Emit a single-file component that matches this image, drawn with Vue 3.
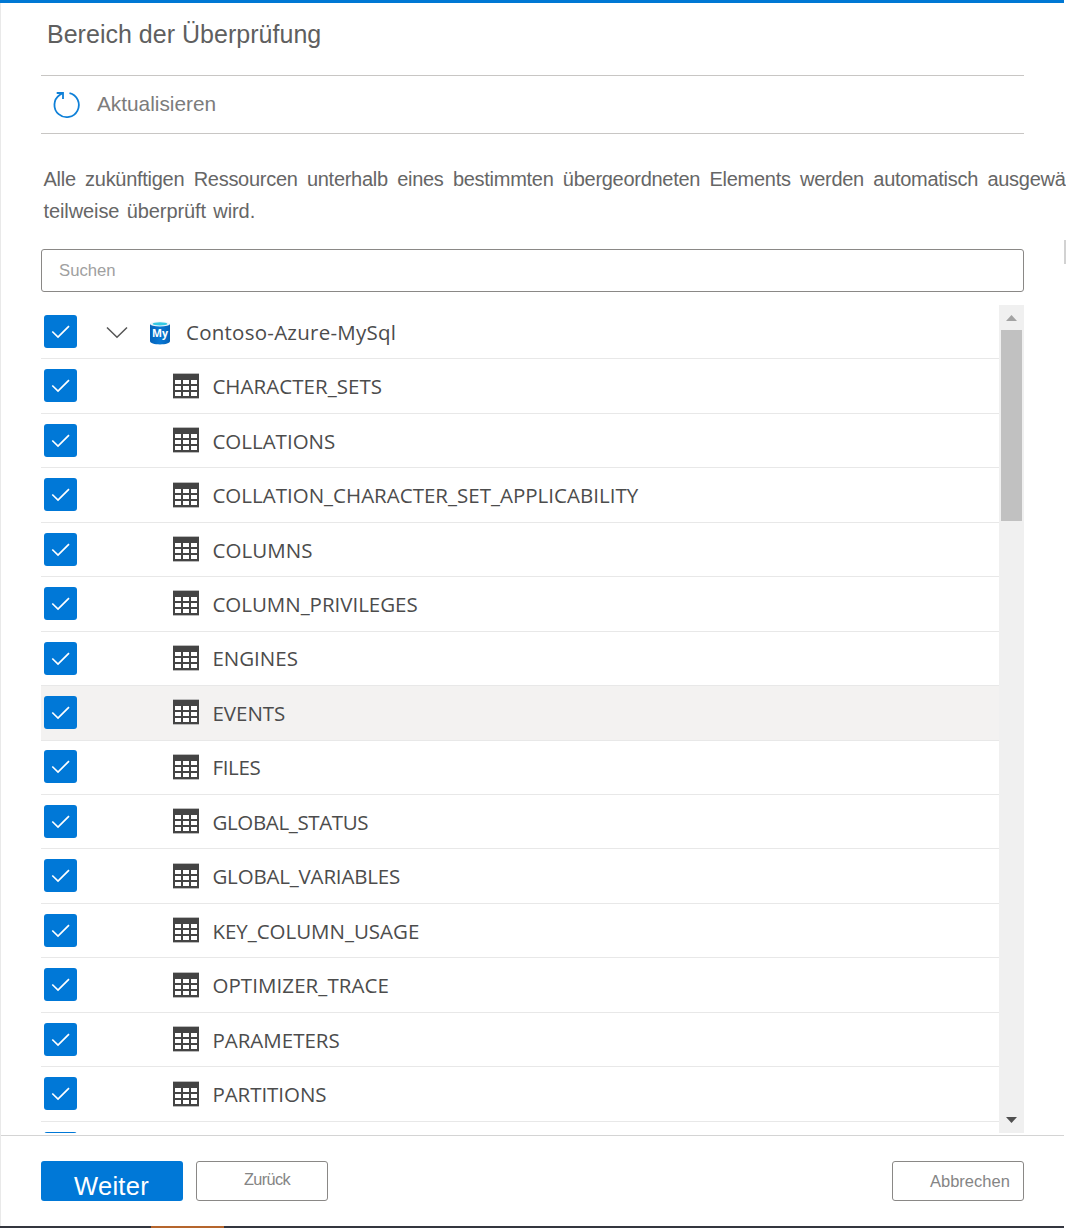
<script setup>
const rows = [
  { name: 'Contoso-Azure-MySql', spacing: 0.25, root: true },
  { name: 'CHARACTER_SETS', spacing: 0.05 },
  { name: 'COLLATIONS', spacing: 0 },
  { name: 'COLLATION_CHARACTER_SET_APPLICABILITY', spacing: 0.01 },
  { name: 'COLUMNS', spacing: 0.1 },
  { name: 'COLUMN_PRIVILEGES', spacing: -0.02 },
  { name: 'ENGINES', spacing: 0 },
  { name: 'EVENTS', spacing: 0, hovered: true },
  { name: 'FILES', spacing: -0.3 },
  { name: 'GLOBAL_STATUS', spacing: -0.35 },
  { name: 'GLOBAL_VARIABLES', spacing: -0.18 },
  { name: 'KEY_COLUMN_USAGE', spacing: -0.02 },
  { name: 'OPTIMIZER_TRACE', spacing: 0.08 },
  { name: 'PARAMETERS', spacing: 0 },
  { name: 'PARTITIONS', spacing: -0.05 },
  { name: '', spacing: 0 },
]
</script>

<template>
  <div class="page">
    <section class="panel">
      <h1 class="title">Bereich der Überprüfung</h1>

      <div class="toolbar">
        <svg class="refresh" width="30" height="30" viewBox="0 0 30 30" fill="none" stroke="#0f80d8" stroke-width="1.8">
          <path d="M17.5 3.1A12.2 12.2 0 1 1 7.6 5L11 3" />
          <path d="M4.7 3H11V8.9" />
        </svg>
        <span>Aktualisieren</span>
      </div>

      <div class="hint">
        <div class="hint-first">Alle zukünftigen Ressourcen unterhalb eines bestimmten übergeordneten Elements werden automatisch ausgewä</div>
        <div class="hint-second">teilweise überprüft wird.</div>
      </div>

      <div class="search">Suchen</div>

      <div class="tree">
        <div class="list">
          <div v-for="row in rows" :key="row.name" class="row" :class="{ root: row.root, hovered: row.hovered }">
            <span class="check">
              <svg width="33" height="33" viewBox="0 0 33 33" fill="none" stroke="#fff" stroke-width="1.7">
                <path d="M8.3 16.5L14 22L25 11.1" />
              </svg>
            </span>
            <template v-if="row.root">
              <svg class="chevron" width="22" height="14" viewBox="0 0 22 14" fill="none" stroke="#555" stroke-width="1.5">
                <path d="M1 1.5L11 11.3L21 1.5" />
              </svg>
              <svg class="mysql" width="20" height="24" viewBox="0 0 20 24">
                <defs>
                  <linearGradient id="body" x1="0" x2="1">
                    <stop offset="0" stop-color="#0562b8" />
                    <stop offset=".5" stop-color="#0878d4" />
                    <stop offset="1" stop-color="#0562b8" />
                  </linearGradient>
                </defs>
                <path d="M0 3V20C0 22.3 4.4 23.4 10 23.4S20 22.3 20 20V3Z" fill="url(#body)" />
                <ellipse cx="10" cy="3" rx="10" ry="2.5" fill="#edf6fa" />
                <ellipse cx="10" cy="2.9" rx="7.4" ry="1.6" fill="#35c9e3" />
                <text x="10" y="15.8" text-anchor="middle" textLength="16" lengthAdjust="spacingAndGlyphs">My</text>
              </svg>
            </template>
            <svg v-else class="table" width="26" height="26" viewBox="0 0 26 26">
              <path d="M0 0H26V26H0Z" fill="#bbb" />
              <path d="M0 1H26V25H0Z" fill="#444" />
              <path d="M2 7h6v4H2zM10 7h6v4H10zM18 7h6v4H18zM2 13h6v4H2zM10 13h6v4H10zM18 13h6v4H18zM2 19h6v4H2zM10 19h6v4H10zM18 19h6v4H18z" fill="#fff" />
            </svg>
            <span class="name" :style="{ letterSpacing: row.spacing + 'px' }">{{ row.name }}</span>
          </div>
        </div>
        <div class="scrollbar">
          <svg class="arrow" width="11" height="6" viewBox="0 0 11 6"><path d="M0 6L5.5 0L11 6Z" fill="#a3a3a3" /></svg>
          <div class="thumb"></div>
          <svg class="arrow" width="11" height="6" viewBox="0 0 11 6"><path d="M0 0H11L5.5 6Z" fill="#505050" /></svg>
        </div>
      </div>

      <footer class="footer">
        <button class="primary">Weiter</button>
        <button class="back">Zurück</button>
        <button class="cancel">Abbrechen</button>
      </footer>
      <div class="taskbar"><div class="active"></div></div>
    </section>
    <div class="edge-mark"></div>
  </div>
</template>

<style>
body {
  background: #fff;
}
</style>

<style scoped>
.page {
  position: relative;
  width: 1066px;
  height: 1228px;
  overflow: hidden;
  font-family: "Liberation Sans", Arial, sans-serif;
  color: #666;
}
.panel {
  box-sizing: border-box;
  display: flex;
  flex-direction: column;
  width: 1064px;
  height: 1228px;
  border-top: 3px solid #0078d4;
  background: linear-gradient(#e9e9e9, #e9e9e9) 0 0 / 1px 100% no-repeat;
}
.title {
  margin: 15px 0 0 47px;
  height: 57px;
  font-size: 25px;
  font-weight: 400;
  line-height: 32px;
  letter-spacing: 0.02px;
  color: #5f5f5f;
}
.toolbar {
  box-sizing: border-box;
  display: flex;
  align-items: center;
  margin: 0 40px 0 41px;
  height: 59px;
  padding-left: 11px;
  border-top: 1px solid #c8c6c4;
  border-bottom: 1px solid #c8c6c4;
  font-size: 20.8px;
  color: #7c7c7c;
}
.toolbar span {
  padding-bottom: 2px;
}
.refresh {
  margin-right: 15px;
}
.hint {
  margin: 29px 0 0 43.5px;
  width: 1022px;
  height: 86px;
  font-size: 20px;
  line-height: 32px;
  letter-spacing: -0.28px;
}
.hint-first {
  text-align-last: justify;
}
.hint-second {
  word-spacing: 2px;
  letter-spacing: -0.1px;
}
.search {
  box-sizing: border-box;
  flex: none;
  margin: 0 40px 0 41px;
  height: 43px;
  padding-left: 17px;
  border: 1px solid #8a8886;
  border-radius: 3px;
  font-size: 16.7px;
  line-height: 41px;
  color: #a0a0a0;
}
.tree {
  display: flex;
  flex: none;
  margin: 13px 40px 0 41px;
  height: 828px;
}
.list {
  flex: 1;
  overflow: hidden;
}
.row {
  box-sizing: border-box;
  display: flex;
  align-items: flex-start;
  height: 54.47px;
  padding-left: 3px;
  border-bottom: 1px solid #e8e8e8;
}
.row.root {
  height: 54.22px;
}
.row.hovered {
  background: #f3f2f1;
}
.check {
  flex: none;
  width: 33px;
  height: 33px;
  margin-top: 9.97px;
  border-radius: 3px;
  background: #0078d7;
}
.check svg {
  display: block;
}
.chevron {
  margin: 21px 0 0 29px;
}
.mysql {
  margin: 16px 0 0 22px;
}
.mysql text {
  font: 700 10.5px "Open Sans", sans-serif;
  fill: #fff;
}
.table {
  margin: 13.4px 0 0 96px;
}
.name {
  margin: 12.9px 0 0 13.4px;
  font: 400 20.5px/28px "Open Sans", "Noto Sans", sans-serif;
  color: #4c4c4c;
}
.root .name {
  margin-left: 16px;
}
.scrollbar {
  box-sizing: border-box;
  display: flex;
  flex-direction: column;
  align-items: center;
  width: 25px;
  padding: 10px 0;
  background: #f0f0f0;
}
.thumb {
  width: 21px;
  height: 191px;
  margin: 9px 0 auto;
  background: #c1c1c1;
}
.footer {
  box-sizing: border-box;
  display: flex;
  align-items: flex-start;
  flex: none;
  height: 91px;
  margin: 2px 0 0 1px;
  padding: 25px 40px 0;
  border-top: 1px solid #d4d4d4;
}
button {
  box-sizing: border-box;
  height: 40px;
  padding: 0;
  border: 1px solid #8a8886;
  border-radius: 3px;
  background: #fff;
  font-family: inherit;
  color: #858585;
  text-align: left;
}
.primary {
  width: 142px;
  padding: 10px 0 0 33px;
  border: 0;
  background: #0078d7;
  font-size: 25.5px;
  letter-spacing: 0.3px;
  line-height: 30px;
  color: #fff;
}
.back {
  width: 132px;
  margin-left: 13px;
  padding: 0 0 4px 47px;
  font-size: 16.3px;
  letter-spacing: -0.6px;
}
.cancel {
  width: 132px;
  margin-left: auto;
  padding: 1px 0 0 37px;
  font-size: 16.5px;
}
.taskbar {
  height: 2px;
  padding-left: 151px;
  background: #34363f;
}
.active {
  width: 73px;
  height: 2px;
  background: #b5652d;
}
.edge-mark {
  position: absolute;
  top: 240px;
  right: 0;
  width: 2px;
  height: 24px;
  background: #d2d2d2;
}
</style>
